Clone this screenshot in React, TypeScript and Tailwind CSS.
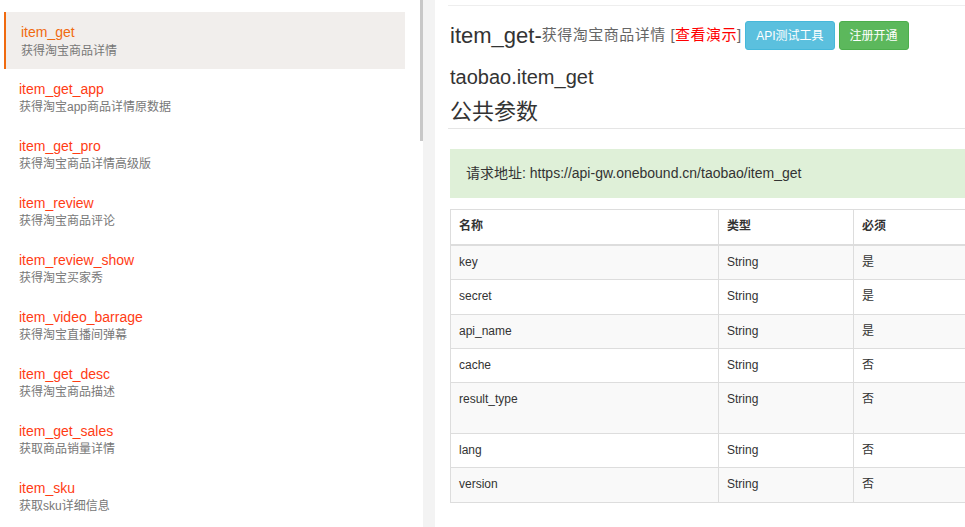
const font = { fontFamily: '"Liberation Sans", "Noto Sans CJK SC", sans-serif' };

const apis = [
  { name: "item_get", desc: "获得淘宝商品详情" },
  { name: "item_get_app", desc: "获得淘宝app商品详情原数据" },
  { name: "item_get_pro", desc: "获得淘宝商品详情高级版" },
  { name: "item_review", desc: "获得淘宝商品评论" },
  { name: "item_review_show", desc: "获得淘宝买家秀" },
  { name: "item_video_barrage", desc: "获得淘宝直播间弹幕" },
  { name: "item_get_desc", desc: "获得淘宝商品描述" },
  { name: "item_get_sales", desc: "获取商品销量详情" },
  { name: "item_sku", desc: "获取sku详细信息" },
];

const params = [
  { name: "key", type: "String", required: "是" },
  { name: "secret", type: "String", required: "是" },
  { name: "api_name", type: "String", required: "是" },
  { name: "cache", type: "String", required: "否" },
  { name: "result_type", type: "String", required: "否", tall: true },
  { name: "lang", type: "String", required: "否" },
  { name: "version", type: "String", required: "否" },
];

function Sidebar() {
  return (
    <div className="w-[420px] shrink-0 pt-[12px] pl-[4px] pr-[15px]">
      {apis.map((api, i) =>
        i === 0 ? (
          <div key={api.name} className="h-[57px] border-l-2 border-[#f06a0f] bg-[#f1eeec] pl-[15px] pt-[12px]">
            <div className="text-[14px] leading-[17px] text-[#f06a0f]">{api.name}</div>
            <div className="mt-[2px] text-[12px] leading-[17px] text-[#777]">{api.desc}</div>
          </div>
        ) : (
          <div key={api.name} className="h-[57px] pl-[15px] pt-[12px]">
            <div className="text-[14px] leading-[17px] text-[#ff3c14]">{api.name}</div>
            <div className="mt-[1px] text-[12px] leading-[17px] text-[#777]">{api.desc}</div>
          </div>
        )
      )}
    </div>
  );
}

function ParamTable() {
  return (
    <table className="w-[580px] border-collapse border border-[#ddd] text-[12px] leading-[17px] text-[#333]">
      <thead>
        <tr className="border-b-2 border-[#ddd]">
          <th className="w-[268px] border border-b-2 border-[#ddd] px-[8px] pt-[8px] pb-[9px] text-left font-bold">名称</th>
          <th className="w-[135px] border border-b-2 border-[#ddd] px-[8px] pt-[8px] pb-[9px] text-left font-bold">类型</th>
          <th className="border border-b-2 border-[#ddd] px-[8px] pt-[8px] pb-[9px] text-left font-bold">必须</th>
        </tr>
      </thead>
      <tbody>
        {params.map((p, i) => (
          <tr key={p.name} className={i % 2 === 0 ? "bg-[#f9f9f9]" : "bg-white"}>
            <td className={`border border-[#ddd] px-[8px] align-top pt-[8px] ${p.tall ? "pb-[25px]" : "pb-[8.25px]"}`}>{p.name}</td>
            <td className="border border-[#ddd] px-[8px] pt-[8px] pb-[8.25px] align-top">{p.type}</td>
            <td className="border border-[#ddd] px-[8px] pt-[8px] pb-[8.25px] align-top">{p.required}</td>
          </tr>
        ))}
      </tbody>
    </table>
  );
}

export default function App() {
  return (
    <div className="flex h-[527px] w-[965px] overflow-hidden bg-white" style={font}>
      <Sidebar />
      <div className="w-[3px] shrink-0">
        <div className="h-[141px] bg-[#c8c8c8]" />
      </div>
      <div className="w-[12px] shrink-0 bg-[#f3f3f3]" />
      <div className="w-[600px] shrink-0 pl-[13px]">
        <div className="h-[5px]" />
        <div className="border-t border-[#eee]" />
        <div className="mt-[15px] flex h-[29px] items-center pl-[2px]">
          <span className="text-[22px] leading-[29px] text-[#333]">item_get-</span>
          <span className="text-[15px] tracking-[0.5px] text-[#666]">获得淘宝商品详情 [</span>
          <span className="text-[15px] tracking-[0.5px] text-[#f00]">查看演示</span>
          <span className="text-[15px] text-[#666]">]</span>
          <button className="ml-[4px] h-[29px] rounded-[3px] border border-[#46b8da] bg-[#5bc0de] px-[10px] text-[12px] text-white">
            API测试工具
          </button>
          <button className="ml-[4px] h-[29px] rounded-[3px] border border-[#4cae4c] bg-[#5cb85c] px-[10px] text-[12px] text-white">
            注册开通
          </button>
        </div>
        <div className="mt-[15px] pl-[2px] text-[20px] leading-[24px] text-[#333]">taobao.item_get</div>
        <div className="mt-[10px] border-b border-[#e5e5e5] pb-[3px] pl-[2px] text-[22px] leading-[26px] text-[#333]">
          公共参数
        </div>
        <div className="ml-[2px] mt-[20px] flex h-[49px] items-center bg-[#dff0d8] px-[16px] text-[14px] text-[#333]">
          请求地址: https://api-gw.onebound.cn/taobao/item_get
        </div>
        <div className="ml-[2px] mt-[11px]">
          <ParamTable />
        </div>
      </div>
    </div>
  );
}
